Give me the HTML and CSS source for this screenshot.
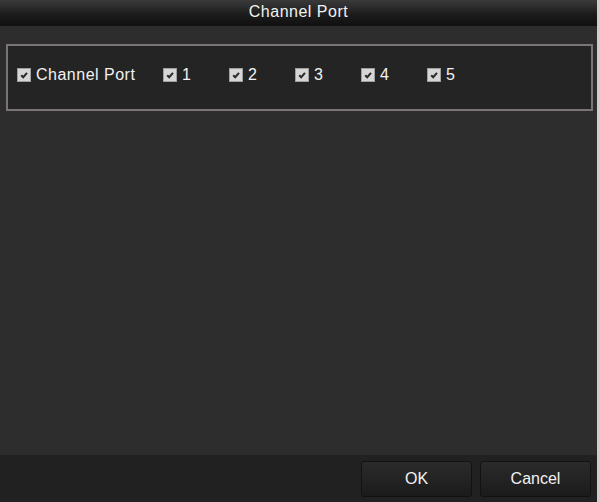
FILE: index.html
```html
<!DOCTYPE html>
<html lang="en">
<head>
  <meta charset="UTF-8">
  <title>Channel Port</title>
  <link rel="stylesheet" href="styles.css">
</head>
<body>
  <div class="dialog">
    <div class="titlebar">Channel Port</div>
    <div class="content">
      <div class="panel">
        <label class="item item-main"><span class="box"><svg viewBox="0 0 12 12"><path d="M3.2 6.2 L5.2 8.2 L9 3.8" /></svg></span>Channel Port</label>
        <label class="item"><span class="box"><svg viewBox="0 0 12 12"><path d="M3.2 6.2 L5.2 8.2 L9 3.8" /></svg></span>1</label>
        <label class="item"><span class="box"><svg viewBox="0 0 12 12"><path d="M3.2 6.2 L5.2 8.2 L9 3.8" /></svg></span>2</label>
        <label class="item"><span class="box"><svg viewBox="0 0 12 12"><path d="M3.2 6.2 L5.2 8.2 L9 3.8" /></svg></span>3</label>
        <label class="item"><span class="box"><svg viewBox="0 0 12 12"><path d="M3.2 6.2 L5.2 8.2 L9 3.8" /></svg></span>4</label>
        <label class="item"><span class="box"><svg viewBox="0 0 12 12"><path d="M3.2 6.2 L5.2 8.2 L9 3.8" /></svg></span>5</label>
      </div>
    </div>
    <div class="footer">
      <button class="btn">OK</button>
      <button class="btn">Cancel</button>
    </div>
  </div>
</body>
</html>
```

FILE: styles.css
```css
html, body {
  margin: 0;
  height: 100%;
}
body {
  background: #cfcfcf;
  font-family: "Liberation Sans", Arial, sans-serif;
  color: #f2f2f2;
}
.dialog {
  width: 597px;
  height: 502px;
  display: flex;
  flex-direction: column;
  background: #2d2d2d;
}
.titlebar {
  height: 26px;
  line-height: 24px;
  text-align: center;
  font-size: 16px;
  letter-spacing: 0.5px;
  background: linear-gradient(#3a3a3a, #1c1c1c 55%, #101010);
}
.content {
  flex: 1;
  padding: 18px 4px 0 6px;
}
.panel {
  height: 58px;
  border: 2px solid #7c7575;
  background: #242424;
  display: flex;
  align-items: center;
  padding-left: 9px;
  padding-bottom: 5px;
}
.item {
  width: 66px;
  display: flex;
  align-items: center;
  font-size: 16px;
  letter-spacing: 0.5px;
}
.item-main {
  width: 146px;
}
.box {
  width: 14px;
  height: 14px;
  margin-right: 5px;
  background: #d6d6d6;
  border: 1px solid #a0a0a0;
  box-sizing: border-box;
  display: flex;
}
.box svg {
  width: 12px;
  height: 12px;
}
.box path {
  fill: none;
  stroke: #2a2a2a;
  stroke-width: 2;
}
.footer {
  height: 47px;
  background: #212121;
  display: flex;
  justify-content: flex-end;
  gap: 8px;
  padding: 6px 6px 0 0;
  box-sizing: border-box;
}
.btn {
  width: 111px;
  height: 36px;
  border: 1px solid #121212;
  border-radius: 3px;
  background: linear-gradient(#2b2b2b, #1b1b1b);
  color: #f2f2f2;
  font-family: "Liberation Sans", Arial, sans-serif;
  font-size: 16px;
}
```
